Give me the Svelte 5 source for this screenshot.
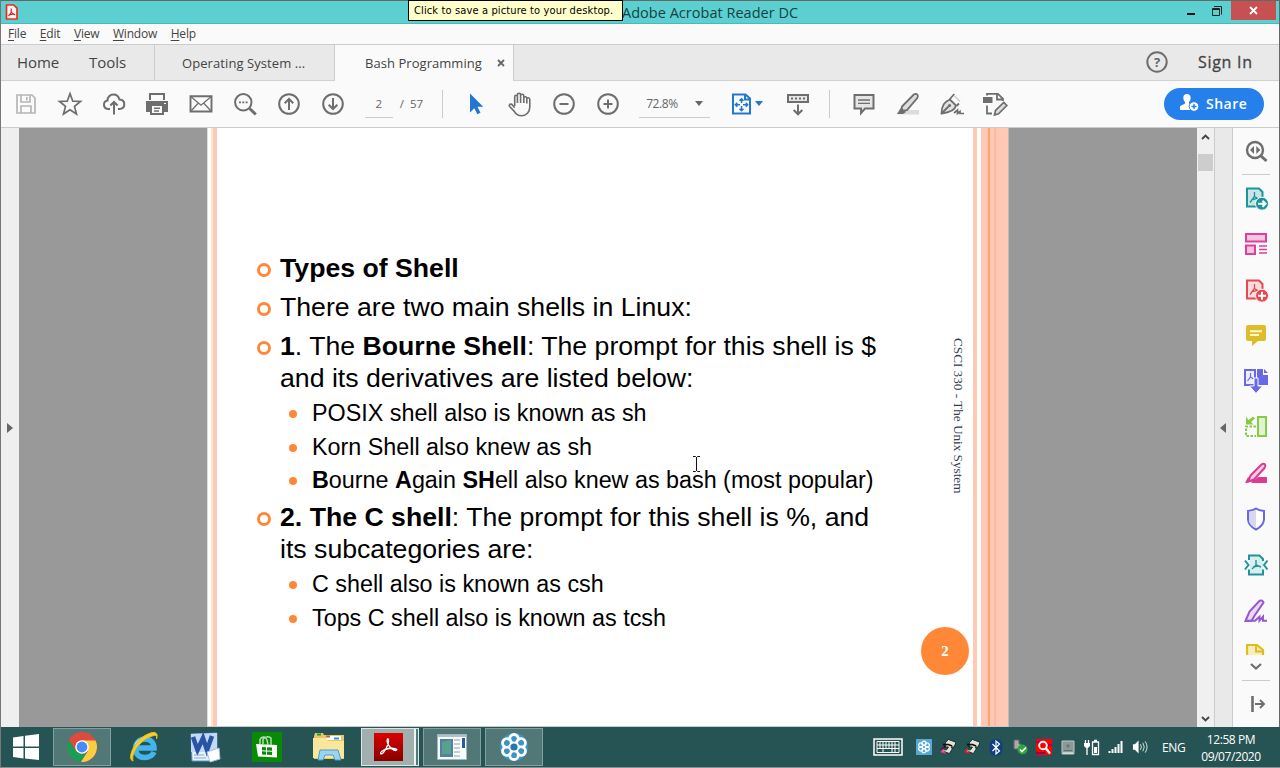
<script>
  const menus = ['File', 'Edit', 'View', 'Window', 'Help'];
  const fileTools = ['save', 'star', 'cloud', 'print', 'mail', 'find', 'up', 'down'];
  const viewTools = ['cursor', 'hand', 'minus', 'plus'];
  const noteTools = ['comment', 'marker', 'pen', 'stamp'];
  const sideTools = ['export', 'organize', 'create', 'note', 'combine', 'compare', 'redact', 'shield', 'compress', 'sign'];
</script>

{#snippet icon(name)}
  <svg class="icon" width="26" height="26" viewBox="0 0 26 26" fill="none" stroke="#6e6e6e" stroke-width="2">
    {#if name === 'save'}
      <g stroke="#b5b5b5" stroke-width="1.7"><path d="M4 4h15l3 3v15H4z" /><path d="M8 4v7h9V4M8 22v-7h10v7" /><path d="M13.8 6v3.4" /></g>
    {:else if name === 'star'}
      <path stroke-width="1.7" d="M13 2.600l2.800 7.600 7.700.3-6 4.900 2 7.600-6.500-4.300-6.500 4.300 2-7.600-6-4.900 7.700-.3z" />
    {:else if name === 'cloud'}
      <path d="M9 18H6.800a4.300 4.300 0 0 1-.3-8.500C6.500 6 9 3.600 12.300 3.600c3.200 0 5.400 2 6 4.800 3 .2 5 2 5 4.700 0 3-2 4.900-5 4.900h-1.300M13 23.500V11.500M9.400 14.500l3.600-3.600 3.600 3.600" />
    {:else if name === 'print'}
      <path fill="#6e6e6e" stroke="none" d="M5 2h16v7H5zM2 10h22v11h-4v3H6v-3H2z" /><path fill="#fafafa" stroke="none" d="M7 4h12v5H7zM8 15h10v7H8z" /><path stroke-width="1.400" d="M10 17.300h6M10 20h5" /><path stroke="#fafafa" stroke-width="1.200" d="M20 12.500h2" />
    {:else if name === 'mail'}
      <path stroke-width="1.900" d="M2.500 5.200h21v15.300h-21z" /><path stroke-width="1.300" d="M3 5.700l10 8.500L23 5.700M3 20l7.400-8M23 20l-7.400-8" />
    {:else if name === 'find'}
      <circle cx="11.300" cy="11.300" r="8.200" /><path stroke-width="3" d="M17.500 17.500l6.300 6" /><path stroke-width="1.700" stroke-dasharray="2 1.300" d="M7 11.300h9" />
    {:else if name === 'up'}
      <circle cx="13" cy="13" r="9.800" /><path d="M13 19V8.500M8.700 12.300L13 8l4.300 4.300" />
    {:else if name === 'down'}
      <circle cx="13" cy="13" r="9.800" /><path d="M13 7v10.500M8.700 13.700L13 18l4.300-4.300" />
    {:else if name === 'cursor'}
      <path fill="#2376d1" stroke="none" d="M7 2.500v19l4.300-4.200 3.100 6 3.100-1.600-3-6h5.700z" />
    {:else if name === 'hand'}
      <path stroke-width="1.600" stroke-linejoin="round" fill="#fafafa" d="M7.700 15V5.800c0-2 2.700-2 2.700 0V3.900c0-2.200 3.200-2.200 3.200 0v1c0-2.200 3.200-2.200 3.200 0v2.300c0-2 3-2 3 0v1c0-1.900 3-1.900 3 .2V16c0 5-3.400 8.700-8.200 8.700-3.600 0-5.800-1.500-7.500-4.600L2.600 15.500c-1.100-2 1.500-3.300 2.800-1.600l2.300 2.800M10.400 5v7M13.600 4.500V12M16.800 5v7M19.800 8v4.600" />
    {:else if name === 'minus'}
      <circle cx="13" cy="13" r="9.800" /><path d="M8.500 13h9" />
    {:else if name === 'plus'}
      <circle cx="13" cy="13" r="9.800" /><path d="M8.500 13h9M13 8.500v9" />
    {:else if name === 'fit'}
      <g stroke="#2376d1"><path d="M4 3.500h12.500l4.500 4V22.500H4zM16 3.500v5h5" /><path stroke-width="1.500" d="M12.500 8v4M12.500 15v4.500M6.500 13.700H11M14 13.700h4.500M10.500 9.800l2-2 2 2M10.500 17.800l2 2 2-2M8.300 11.700l-2 2 2 2M16.700 11.700l2 2-2 2" /></g>
    {:else if name === 'keys'}
      <path fill="#e6e6e6" d="M3 4h20v7H3z" /><path stroke-width="2" stroke-dasharray="2 2" d="M6 7.500h15" /><path d="M13 13.500v10M8.700 19l4.300 4.300 4.300-4.300" />
    {:else if name === 'comment'}
      <path fill="#e5e5e5" d="M3.500 4h19v13.500H14L10 22v-4.500H3.500z" /><path stroke-width="1.300" d="M7 9h12M7 12.300h12" />
    {:else if name === 'marker'}
      <path fill="#dcdcdc" stroke="none" d="M10 19h14v4.500H2z" /><path fill="#ddd" stroke-width="1.800" d="M7 15.500L18.800 3.500q2-1.300 3.500 0 1.300 1.500 0 3.500L12 19.200 6.500 20z" /><path fill="#6e6e6e" stroke="none" d="M6 16.500l5 4.500-3 2H2z" />
    {:else if name === 'pen'}
      <path fill="#e2e2e2" stroke-width="1.800" d="M2.500 22.500C2.500 16 4 11 11 8.500l6 6C16 19 11 21.500 2.500 22.500z" /><path stroke-width="1.800" d="M10.500 8.500l4.800-5.500M17.500 15l2.500-2.500M3 22l6.500-6.500" /><path stroke="#ccc" stroke-width="1.500" d="M15.500 5l5.500 5.500" /><circle cx="10.500" cy="14.500" r="1.600" fill="#6e6e6e" stroke="none" /><path stroke-width="1.700" d="M15 22l3.500-3v3.500l2.500-2v2h4" />
    {:else if name === 'stamp'}
      <rect x="1" y="6" width="9.500" height="6" fill="#6e6e6e" stroke="none" /><path stroke-width="1.800" d="M5 4.500V2.800h11l5 5V10M5 14.500v8h5M15 3v5.500h6" /><path fill="#ddd" stroke-width="1.700" d="M12.500 24l1-4.500 8.300-8 3 3-8.300 8.300z" />
    {:else if name === 'help'}
      <circle cx="13" cy="13" r="9.700" />
    {:else if name === 'wide'}
      <circle cx="12" cy="12" r="8" stroke-width="2.400" /><path stroke-width="3" d="M18 18l5.500 5" /><path fill="#6e6e6e" stroke="none" d="M11 8v8l-4-4zM13.300 8v8l4-4z" />
    {:else if name === 'export' || name === 'create'}
      {@const c = name === 'export' ? '#19959b' : '#e5484e'}
      <path stroke={c} fill={name === 'export' ? '#c9e4e3' : '#fadcdd'} d="M4 3.500h12l3.500 3.500v14.500H4z" /><path stroke={c} stroke-width="1.300" d="M11.500 7v4.500l-4.500 6M11.500 11.500l5.500 3.500M8.500 14.800l6-1.500" /><circle cx="19" cy="18.700" r="6.500" fill={c} stroke="#fafafa" stroke-width="1" /><path stroke="#fff" d={name === 'export' ? 'M15 18.700h7M19.500 15.700l3 3-3 3' : 'M15 18.700h8M19 14.700v8'} />
    {:else if name === 'organize'}
      <g stroke="#df3f9b"><path fill="#f5c6e0" d="M3 3h20v7.500H3zM3 14.500h9v8.500H3z" /><path stroke-width="1.300" d="M16 15h8M16 18.500h8M16 22h8" /></g>
    {:else if name === 'note'}
      <path fill="#dfbc2a" stroke="none" d="M5 3h16q2 0 2 2v12q0 2-2 2h-6l-6 5v-5H5q-2 0-2-2V5q0-2 2-2z" /><path stroke="#fff8cf" d="M7 9.300h12M7 13h9" />
    {:else if name === 'combine'}
      <path fill="#6868e8" stroke="none" d="M14 1h6v6h5v10H14zM21 1l4 4h-4z" /><path stroke="#6868e8" fill="#eeeefe" d="M2 2h10v15H2z" /><path stroke="#6868e8" stroke-width="1.200" d="M7.500 5v4l-3 4M7.500 9l3 2" /><path fill="#6868e8" stroke="#fafafa" stroke-width="1" d="M11 10h4v8h4.500L13 25.500 6.500 18H11z" />
    {:else if name === 'compare'}
      <g stroke="#86cc43"><path fill="#e1f2d4" d="M15 3h8v19h-8z" /><path stroke-dasharray="2.500 1.500" d="M13 12.500H3V22h10" /></g><path fill="#86cc43" stroke="none" d="M3 3v7.500h7.500L8 8l4-3.500-2-2L5.800 6z" />
    {:else if name === 'redact'}
      <path fill="#db3c92" stroke="none" d="M8 23l7-6h9v6zM2 23l3-6 8 4z" /><path stroke="#db3c92" fill="#f6cce2" d="M7.500 15.500L18.500 4.500q2-1.500 3.500 0 1 1.500-.5 3.500L11 19.500l-6 2z" />
    {:else if name === 'shield'}
      <path stroke="#6868e0" fill="#fff" d="M13 2.500c2.500 2 5 2.300 8 2.500v8c0 5.500-3 8-8 10.500-5-2.500-8-5-8-10.500V5c3-.2 5.500-.5 8-2.500z" /><path fill="#d7d7f5" stroke="none" d="M13 4c-2.400 1.500-4.500 1.900-7 2v7c0 5 2.600 7 7 9.300z" />
    {:else if name === 'compress'}
      <path fill="#d9eeee" stroke="none" d="M7 4h10l3 3v15H7z" /><g stroke="#21949b"><path d="M6 8V3.500h10.500l3.500 3.500v2M6 17.500v5h14v-5" /><path d="M2 8.500l3.500 4.500L2 17.500M24.500 8.500L21 13l3.500 4.500" /><path stroke-width="1.400" d="M13 8v5l-4 4M13 13l5 2M10 15l5-1" /></g>
    {:else if name === 'sign'}
      <path stroke="#9757cf" fill="#ead9f7" d="M2.500 23l4-9.500L16.500 2.800q3-1.200 4 1.700L12 17 8.500 22.800z" /><path stroke="#9757cf" d="M3 22.700h9l4.500-4v4l3.500-4v4h4" />
    {/if}
  </svg>
{/snippet}

<div class="desktop">
  <div class="window">
    <header class="title">
      <svg width="13" height="16" viewBox="0 0 13 16"><path d="M1.500 1h7.200L12 4.200V15H1.500z" fill="#fff4f2" stroke="#ed2b24" stroke-width="1.700" stroke-linejoin="round" /><path d="M6.200 4.500v4L3.500 12M6.200 8.500l4 2.500M4.300 10.800l4-1" fill="none" stroke="#c62128" stroke-width="1.200" /></svg>
      <span class="app">Adobe Acrobat Reader DC</span>
      <div class="tip">Click to save a picture to your desktop.</div>
      <div class="controls">
        <svg width="12" height="20" viewBox="0 0 12 20"><path d="M2 13h8" stroke="#111" stroke-width="2" /></svg>
        <svg width="12" height="20" viewBox="0 0 12 20"><path d="M1.500 7.500h7v7h-7zM1 8.500h8M3 5.500h7.500v8" fill="none" stroke="#222" /></svg>
        <span class="close"><svg width="9" height="9" viewBox="0 0 9 9"><path d="M1 1l7 7M8 1L1 8" stroke="#fff" stroke-width="1.800" /></svg></span>
      </div>
    </header>
    <nav class="menu">
      {#each menus as m}<span><u>{m[0]}</u>{m.slice(1)}</span>{/each}
    </nav>
    <div class="tabs">
      <span class="home">Home</span><span class="tools">Tools</span>
      <span class="tab first">Operating System ...</span>
      <span class="tab active">Bash Programming <svg width="8" height="8" viewBox="0 0 8 8"><path d="M1 1l6 6M7 1L1 7" stroke="#666" stroke-width="1.800" /></svg></span>
      <div class="account"><span class="help">{@render icon('help')}<b>?</b></span><span class="signin">Sign In</span></div>
    </div>
    <div class="toolbar">
      {#each fileTools as t}<span class="cell">{@render icon(t)}</span>{/each}
      <div class="pages"><span class="num">2</span><span>/&nbsp; 57</span></div>
      <i class="sep"></i>
      {#each viewTools as t}<span class="cell">{@render icon(t)}</span>{/each}
      <div class="zoom"><span>72.8%</span><i class="caret"></i></div>
      <span class="fit">{@render icon('fit')}<i class="caret blue"></i></span>
      <span class="cell">{@render icon('keys')}</span>
      <i class="sep second"></i>
      {#each noteTools as t}<span class="cell">{@render icon(t)}</span>{/each}
      <button class="share"><svg width="20" height="18" viewBox="0 0 20 18"><path fill="#fff" d="M7 0c5 0 4 7 2 8v1.500c1 1 2 1 3 1.500-2 2-2 3-1.500 5H0v-2.500C0 11 3 11 5 9.500V8C3 6 2 0 7 0z" /><circle cx="14" cy="12.500" r="4.800" fill="#fff" stroke="#2680eb" /><path stroke="#2680eb" stroke-width="1.400" d="M11.500 12.500h5M14 10v5" /></svg>Share</button>
    </div>

    <main class="content">
      <div class="leftpane"><i class="arrow right"></i></div>
      <div class="canvas">
        <article class="page">
          <i class="stripes left"></i>
          <ul class="slide">
            <li class="l1"><b>Types of Shell</b></li>
            <li class="l2">There are two main shells in Linux:</li>
            <li class="l3"><b>1</b>. The <b>Bourne Shell</b>: The prompt for this shell is $<br />and its derivatives are listed below:
              <ul>
                <li>POSIX shell also is known as sh</li>
                <li>Korn Shell also knew as sh</li>
                <li><b>B</b>ourne <b>A</b>gain <b>SH</b>ell also knew as bash (most popular)</li>
              </ul>
            </li>
            <li class="l4"><b>2. The C shell</b>: The prompt for this shell is %, and<br />its subcategories are:
              <ul>
                <li>C shell also is known as csh</li>
                <li>Tops C shell also is known as tcsh</li>
              </ul>
            </li>
          </ul>
          <div class="margin"><span class="course">CSCI 330 - The Unix System</span><span class="badge">2</span></div>
          <i class="stripes rightside"></i>
          <svg class="ibeam" width="9" height="18" viewBox="0 0 9 18"><path d="M1 1.500h2.500l1 1 1-1H8M4.500 2v14M1 16.500h2.500l1-1 1 1H8" fill="none" stroke="#111" /></svg>
        </article>
      </div>
      <div class="scroll">
        <svg width="9" height="6" viewBox="0 0 9 6"><path d="M1 5l3.500-3.500L8 5" fill="none" stroke="#444" stroke-width="1.900" /></svg>
        <i class="thumb"></i>
        <svg width="9" height="6" viewBox="0 0 9 6"><path d="M1 1l3.500 3.500L8 1" fill="none" stroke="#444" stroke-width="1.900" /></svg>
      </div>
      <div class="collapse"><i class="arrow leftward"></i></div>
      <aside class="side">
        <span class="top">{@render icon('wide')}</span>
        <i class="rule"></i>
        {#each sideTools as t}<span class="tool">{@render icon(t)}</span>{/each}
        <svg class="cut" width="24" height="12" viewBox="0 0 24 12"><path d="M1 14V2h10l6 5v5" fill="#f7edc0" stroke="#dfbe16" stroke-width="2.200" /><path d="M10 2v6.500h7" fill="none" stroke="#dfbe16" stroke-width="2" /></svg>
        <svg class="more" width="14" height="9" viewBox="0 0 14 9"><path d="M2 2l5 4.500L12 2" fill="none" stroke="#6e6e6e" stroke-width="2.200" /></svg>
        <i class="rule low"></i>
        <svg class="dock" width="16" height="18" viewBox="0 0 16 18"><path d="M2.500 1v16" stroke="#6e6e6e" stroke-width="2.600" /><path d="M5 9h9M10 5l4 4-4 4" fill="none" stroke="#6e6e6e" stroke-width="1.900" /></svg>
      </aside>
    </main>
  </div>

  <footer class="taskbar">
    <span class="start"><svg width="28" height="26" viewBox="0 0 28 26"><path fill="#fff" d="M1 3.500l10.500-1.600v10.600H1zM13 1.700L27 0v12.500H13zM1 14h10.500v10.500L1 23zM13 14h14v12l-14-1.600z" /></svg></span>
    <span class="task open"><svg width="32" height="32" viewBox="0 0 32 32"><circle cx="16" cy="16" r="15" fill="#de4a3d" /><path fill="#1b9c57" d="M3 8.500A15 15 0 0 0 15 31l6.500-11-5.500 3-6-3z" /><path fill="#fccd42" d="M16 9.500h13.500A15 15 0 0 1 15 31l7-11z" /><circle cx="16" cy="16" r="6.800" fill="#fff" /><circle cx="16" cy="16" r="5.400" fill="#4a8af4" /></svg></span>
    <span class="task"><svg width="34" height="32" viewBox="0 0 34 32"><path d="M27 21c-1.500 3.500-5 5.500-9.500 5.500-6 0-9-4-9-9s4-9.500 9.500-9.500 9 4 9 9H9" fill="none" stroke="#42b6ec" stroke-width="5.500" /><path d="M8 14.500c1-4.500 5-7 10-7" fill="none" stroke="#aae8ff" stroke-width="1.500" /><path d="M6 30C-1 28 8 8 21 3c6-3 11-2 8.500 5 .5-3-.5-4.500-4-3C15 8 4 20 6 30z" fill="#f9cf2b" stroke="#eebb18" /></svg></span>
    <span class="task"><svg width="32" height="32" viewBox="0 0 32 32"><path fill="#e9f3ff" stroke="#5c8fce" d="M2 3l26-1v20l-8 8H3z" /><path fill="#c1d9f7" d="M2 3l26-1v19H2z" /><path d="M4 6l4.500 13L14 7l4 12L23 5" fill="none" stroke="#2754a7" stroke-width="4.500" /><path d="M18 21l12-4 1 11-10 3z" fill="#fff" stroke="#a8bfe1" /><path d="M5 24h10M5 27h12" stroke="#8ca9ce" /></svg></span>
    <span class="task"><svg width="30" height="30" viewBox="0 0 30 30"><path fill="#078b05" d="M0 0h30v30H0z" /><path d="M4 12l21 1v12.500L6 24.500z" fill="#fff" /><path d="M8 12V7.500q1-2.500 4-2.500 3 0 4 8M11 12V7q4-4 8-1v7" fill="none" stroke="#b5dcb5" stroke-width="1.500" /><path fill="#078b05" d="M10 15l4 .2v3.300l-4-.2zM15 15.300l5 .2v3.200l-5-.2zM10 19.300l4 .2v3.300l-4-.2zM15 19.500l5 .2v3.300l-5-.2z" /></svg></span>
    <span class="task"><svg width="34" height="30" viewBox="0 0 34 30"><path fill="#e8c766" d="M2 4l1-3h8l1 2h20v24H2z" /><path fill="#fff" d="M14 4h15v4H14z" /><path stroke="#1a9c3c" stroke-width="2" d="M5 2.500h4" /><path stroke="#dc5234" stroke-width="2" d="M14 4.500h4" /><path stroke="#3a92da" stroke-width="2" d="M22 6.500h5" /><path fill="#fbe79c" d="M1 6h13l2 3h16v17H1z" /><path d="M6 28l2-10h18l3 10h-6l-2-5h-8l-2 5z" fill="#9bd4f2" stroke="#4d9bcc" /></svg></span>
    <span class="task reader"><svg width="29" height="28" viewBox="0 0 29 28"><defs><linearGradient id="red" x2="0" y2="1"><stop stop-color="#dc0000" /><stop offset="1" stop-color="#850000" /></linearGradient></defs><path fill="url(#red)" d="M0 0h29v28H0z" /><path d="M13.500 6c-2 4 4 11 8 11.500 4-.5-1-3-7-2-6 1.500-9 4-7.500 5.500 3 0 8-10 7.500-14-.3-1.500-1-1.500-1-1" fill="none" stroke="#fff" stroke-width="1.300" /></svg></span>
    <span class="task open second"><svg width="30" height="26" viewBox="0 0 30 26"><path fill="#f8fbfc" stroke="#a4b7b8" d="M.5.5h29v25H.5z" /><path fill="#567fa5" d="M3 5h13v18H3z" /><path fill="#56a28a" d="M5 8l9-2v14H5z" /><path d="M17 6h6M17 10h6M17 14h6M17 18h6M17 22h6" stroke="#90a0aa" /><path fill="#2a5a98" d="M25 4h3v10h-3z" /><path stroke="#6b8796" d="M1 2h28" /></svg></span>
    <span class="task open third"><svg width="32" height="32" viewBox="0 0 32 32"><circle cx="16" cy="16" r="14" fill="#3a94c8" /><g fill="#3a94c8" stroke="#fff" stroke-width="2.800">{#each [0, 60, 120, 180, 240, 300] as angle}<circle cx="16" cy="7.800" r="4.300" transform="rotate({angle} 16 16)" />{/each}</g><circle cx="16" cy="16" r="3.600" fill="#2477ae" /></svg></span>

    <div class="tray">
      <svg class="board" width="30" height="18" viewBox="0 0 30 18"><path fill="none" stroke="#fff" stroke-width="1.500" d="M1 1h28v16H1z" /><path fill="none" stroke="#fff" d="M4 3.500h22v11H4zM4 7h22M4 10.500h22M7 4v6.500M10 4v10M13 4v6.500M16 4v6.500M19 4v10M22 4v10" /></svg>
      <svg class="flower" width="16" height="16" viewBox="0 0 16 16"><path fill="#57a9d3" d="M0 0h16v16H0z" /><g fill="none" stroke="#fff" stroke-width="1.200">{#each [0, 60, 120, 180, 240, 300] as angle}<circle cx="8" cy="4.300" r="2.100" transform="rotate({angle} 8 8)" />{/each}</g></svg>
      {#each [0, 1] as n}
        <svg width="17" height="16" viewBox="0 0 17 16"><path fill="#e2e4da" stroke="#192a2a" d="M6 3l3-3 8 3-2 5-3 0 1 2-3 5-5-2-3 1 0-3 5 0 2-3-4 0z" /><path stroke="#111" stroke-width="1.700" d="M1 11l5-4M3 5.500h5M8 5l5 2" /><path stroke={n ? '#f21421' : '#ec338b'} stroke-width="1.600" d="M1 13l5 1.500M1 13l3-3" /><path stroke={n ? '#18a76a' : '#711a68'} d="M1 11l4-3" /></svg>
      {/each}
      <svg width="13" height="17" viewBox="0 0 13 17"><rect width="13" height="17" rx="6" fill="#123e80" /><path d="M3 5l7 7-3.500 3V2L10 5l-7 7" fill="none" stroke="#fff" stroke-width="1.200" /></svg>
      <svg width="16" height="16" viewBox="0 0 16 16"><path fill="#aaa" stroke="#666" d="M2 1h5v4h2v5H2z" /><circle cx="10.500" cy="10.500" r="5" fill="#2da63a" /><path d="M8 10.500l2 2 4-4" fill="none" stroke="#fff" stroke-width="1.600" /></svg>
      <svg width="16" height="16" viewBox="0 0 16 16"><path fill="#f00" d="M0 0h16v16H0z" /><path stroke="#800060" stroke-width="1.500" d="M0 3h4M12 6h4M0 14h9" /><circle cx="7" cy="6.500" r="3.800" fill="#f00" stroke="#fff" stroke-width="1.900" /><path stroke="#fff" stroke-width="2.300" d="M10 9.500l4 5" /></svg>
      <svg width="14" height="15" viewBox="0 0 14 15"><path fill="#8b9999" stroke="#c1c7c6" d="M1 1h12v13H1z" /><path stroke="#5e7070" d="M3 10.500h8M5 6h4M7 4v4" /><path stroke="#fff" d="M2 13h10" /></svg>
      <svg width="16" height="17" viewBox="0 0 16 17"><path fill="none" stroke="#fff" stroke-width="1.300" d="M1.500 1v4M4.500 1v4M3 8v8M8.500 3h6v12.500h-6zM10 1.500h3" /><path fill="#fff" d="M0 4h6v3L4 9H2L0 7zM10 8h3v6h-3z" /></svg>
      <svg width="16" height="14" viewBox="0 0 16 14"><path stroke="#fff" stroke-width="2" d="M1.500 11v2M4.500 9v4M7.500 7v6M10.500 4v9M13.500 1v12" /></svg>
      <svg width="17" height="16" viewBox="0 0 17 16"><path fill="#fff" d="M1 5h2l4-4v14l-4-4H1z" /><path d="M9 5q2 3 0 6M11.500 3.500q3 4.500 0 9M14 2q4 6 0 12" fill="none" stroke="#dce9e8" /></svg>
      <span class="lang">ENG</span>
      <div class="clock"><span>12:58 PM</span><span>09/07/2020</span></div>
    </div>
  </footer>
</div>

<style>
  :global(body) { margin: 0; overflow: hidden; }
  *, *::before { box-sizing: border-box; }
  .desktop { width: 1280px; height: 768px; display: flex; flex-direction: column; font-family: "Open Sans", "Noto Sans", sans-serif; color: #444; background: #fafafa; overflow: hidden; }
  .window { height: 727px; display: flex; flex-direction: column; border: 1px solid #626969; border-bottom: 0; border-left-color: #777; }
  svg { display: block; flex: none; }
  .title { position: relative; height: 23px; display: flex; align-items: flex-start; padding: 3px 3px 0 4px; background: #5cd0d0; border-bottom: 1px solid #4db8b8; }
  .app { margin-left: 604px; font-size: 14.500px; line-height: 18px; color: #174044; letter-spacing: .02px; white-space: nowrap; }
  .tip { position: absolute; left: 407px; top: -1px; width: 215px; height: 21px; border: 1px solid #000; background: #ffffcb; color: #000; font: 11px/19px "DejaVu Sans Condensed", "DejaVu Sans", sans-serif; font-stretch: condensed; letter-spacing: .13px; padding-left: 5px; white-space: nowrap; }
  .controls { margin: -3px 0 0 auto; display: flex; gap: 14px; }
  .close { width: 45px; height: 19px; margin-left: -4px; background: #c75050; display: grid; place-items: center; }
  .controls svg { position: relative; left: 2px; }
  .close svg { left: 0; }
  .menu { height: 21px; display: flex; gap: 13.500px; padding: 2px 0 0 7px; border-bottom: 1px solid #ccc; font-size: 12px; line-height: 16px; letter-spacing: -.18px; }
  u { text-underline-offset: 2px; text-decoration-thickness: 1px; }
  .tabs { height: 36px; display: flex; align-items: center; background: #e9e9e9; border-bottom: 1px solid #d0d0d0; font-size: 13px; }
  .home { width: 88px; padding-left: 16px; margin-top: -2px; font-size: 15px; letter-spacing: -.1px; }
  .tools { width: 65px; margin-top: -2px; font-size: 15px; }
  .tab { height: 36px; line-height: 36px; width: 180px; border-left: 1px solid #ccc; flex: none; white-space: nowrap; }
  .first { padding-left: 27px; letter-spacing: .08px; }
  .active { display: flex; align-items: center; padding-left: 30px; background: #fafafa; border-right: 1px solid #ccc; letter-spacing: .05px; }
  .active svg { margin-left: auto; margin-right: 8px; }
  .account { margin-left: auto; display: flex; align-items: center; margin-top: -2px; }
  .help { display: grid; place-items: center; margin-right: 28px; color: #666; font-size: 13px; }
  .help > * { grid-area: 1 / 1; }
  .help :global(svg) { grid-area: 1 / 1; }
  .signin { width: 81px; font-size: 16px; letter-spacing: .7px; color: #444; -webkit-text-stroke: .3px #444; }
  .signin { width: 81px; }
  .toolbar { height: 47px; flex: none; display: flex; align-items: center; padding: 0 0 1px 3px; border-bottom: 1px solid #ccc; background: #fafafa; }
  .cell { width: 43.850px; flex: none; display: grid; place-items: center; }
  .pages { width: 87px; height: 28px; display: flex; padding-left: 10px; gap: 7px; font-size: 11.500px; line-height: 27px; color: #666; }
  .num { width: 28px; text-align: center; border-bottom: 1px solid #ccc; }
  .sep { width: 1px; height: 28px; background: #ccc; margin-right: 11.500px; flex: none; }
  .zoom { width: 71px; height: 28px; margin: 0 19px 0 9.500px; padding: 0 7px; display: flex; align-items: center; justify-content: space-between; border-bottom: 1px solid #ccc; color: #666; font-size: 12px; letter-spacing: -.4px; }
  .caret { border: 4px solid transparent; border-top: 5px solid #666; border-bottom: 0; }
  .blue { border-top-color: #2376d1; }
  .fit { width: 46.500px; display: flex; align-items: center; }
  .second { margin-left: 10px; }
  .share { margin-left: auto; margin-right: 15px; width: 100px; height: 32px; padding: 0 0 1px 16px; border: 0; border-radius: 16px; background: #2680eb; color: #fff; display: flex; align-items: center; gap: 6px; font: 600 14px "Open Sans", sans-serif; letter-spacing: .5px; }
  .content { height: 599px; flex: none; display: flex; background: #e9e9e9; }
  .leftpane { width: 18px; display: flex; align-items: center; background: #efefef; padding-left: 6px; }
  .arrow { width: 0; height: 0; border: 5px solid transparent; }
  .right { border-left: 6px solid #666; border-right: 0; }
  .leftward { border-right: 6px solid #666; border-left: 0; margin-right: 2px; }
  .canvas { width: 1178px; background: #999; padding-left: 188px; }
  .page { position: relative; width: 802px; height: 599px; display: flex; background: #fff; border-left: 1px solid #ddd; border-right: 1px solid #bbb; border-bottom: 1px solid #ccc; overflow: hidden; }
  .stripes { height: 600px; flex: none; }
  .left { width: 9px; background: linear-gradient(90deg, #fff 3px, #ffe4da 3px 5px, #ffc9b5 5px 9px); }
  .rightside { width: 35px; background: linear-gradient(90deg, #ffc9b5 0 4px, #fff 4px 8px, #ffc9b5 8px 15px, #ffa26d 15px 17px, #ffc9b5 17px 21px, #ffb99e 21px 23px, #ffc9b5 23px); }
  ul { list-style: none; padding: 0; margin: 0; }
  .slide { width: 677px; padding: 124px 0 0 63px; color: #000; font: 26.660px/32px "Liberation Sans", sans-serif; white-space: nowrap; }
  .slide > li { position: relative; }
  .slide > li::before { content: ""; position: absolute; left: -23px; top: 11px; width: 14px; height: 14px; border: 3px solid #ff8838; border-radius: 50%; }
  .slide > li + li { margin-top: 7px; }
  .slide ul { margin: 5px 0 0 32px; font-size: 23.330px; line-height: 28px; }
  .slide ul li { position: relative; }
  .slide ul li + li { margin-top: 5.700px; }
  .slide ul li::before { content: ""; position: absolute; left: -23px; top: 11px; width: 8px; height: 8px; border-radius: 50%; background: #ff8838; }
  .margin { width: 79px; display: flex; flex-direction: column; align-items: flex-end; padding: 210px 4px 0 0; }
  .course { height: 157px; margin-right: 3px; font: 13.200px/15px "Liberation Serif", serif; writing-mode: vertical-rl; white-space: nowrap; color: #333c50; }
  .badge { width: 48px; height: 48px; margin-top: 132px; border-radius: 50%; display: grid; place-items: center; background: #ff8838; color: #fff; font: bold 15px "Liberation Serif", serif; }
  .ibeam { position: absolute; left: 484px; top: 327px; }
  .scroll { width: 18px; background: #f0f0f0; border-right: 1px solid #ccc; display: flex; flex-direction: column; align-items: center; padding: 6px 0 5px; }
  .thumb { width: 15px; height: 17px; margin: 14px 0 auto; background: #cdcdcd; }
  .collapse { width: 18px; display: flex; align-items: center; justify-content: center; border-right: 1px solid #ccc; }
  .side { width: 46px; display: flex; flex-direction: column; align-items: center; background: #fafafa; overflow: hidden; }
  .top { height: 46px; display: grid; place-items: center; }
  .rule { width: 28px; height: 1px; background: #ccc; flex: none; }
  .tool { height: 45.850px; flex: none; display: grid; place-items: center; }
  .cut { margin-top: 10px; margin-left: 4px; }
  .more { margin-top: 7px; }
  .low { margin-top: 9px; }
  .dock { margin-top: 14px; margin-left: 4px; }
  .taskbar { height: 41px; display: flex; align-items: center; background: #265353; border-bottom: 1px solid #879191; border-left: 1px solid #777; color: #fff; }
  .start { width: 52px; padding-left: 11px; }
  .task { width: 58px; height: 38px; margin-right: 3.700px; display: grid; place-items: center; flex: none; }
  .open { background: #527777; border: 1px solid #83a09f; }
  .reader { width: 58px; margin-left: 0; background: linear-gradient(90deg, #a1b0af 52px, #eef4f3 52px 54px, #527777 54px 56px, #dfe9e8 56px); border: 1px solid #dce7e5; padding-right: 4px; }
  .second.task { margin-left: 0; }
  .third { margin-left: 0; }
  .tray { margin-left: auto; display: flex; align-items: center; gap: 8px; padding-right: 19px; }
  .tray svg:not(.board) { width: 16px; }
  .flower { margin-left: 5px; }
  .lang { width: 23px; font-size: 12px; letter-spacing: -.4px; margin-left: 6px; }
  .clock { width: 60px; margin-left: 8px; display: flex; flex-direction: column; align-items: center; font-size: 12px; line-height: 17px; letter-spacing: -.42px; white-space: nowrap; position: relative; top: 1px; }
</style>
